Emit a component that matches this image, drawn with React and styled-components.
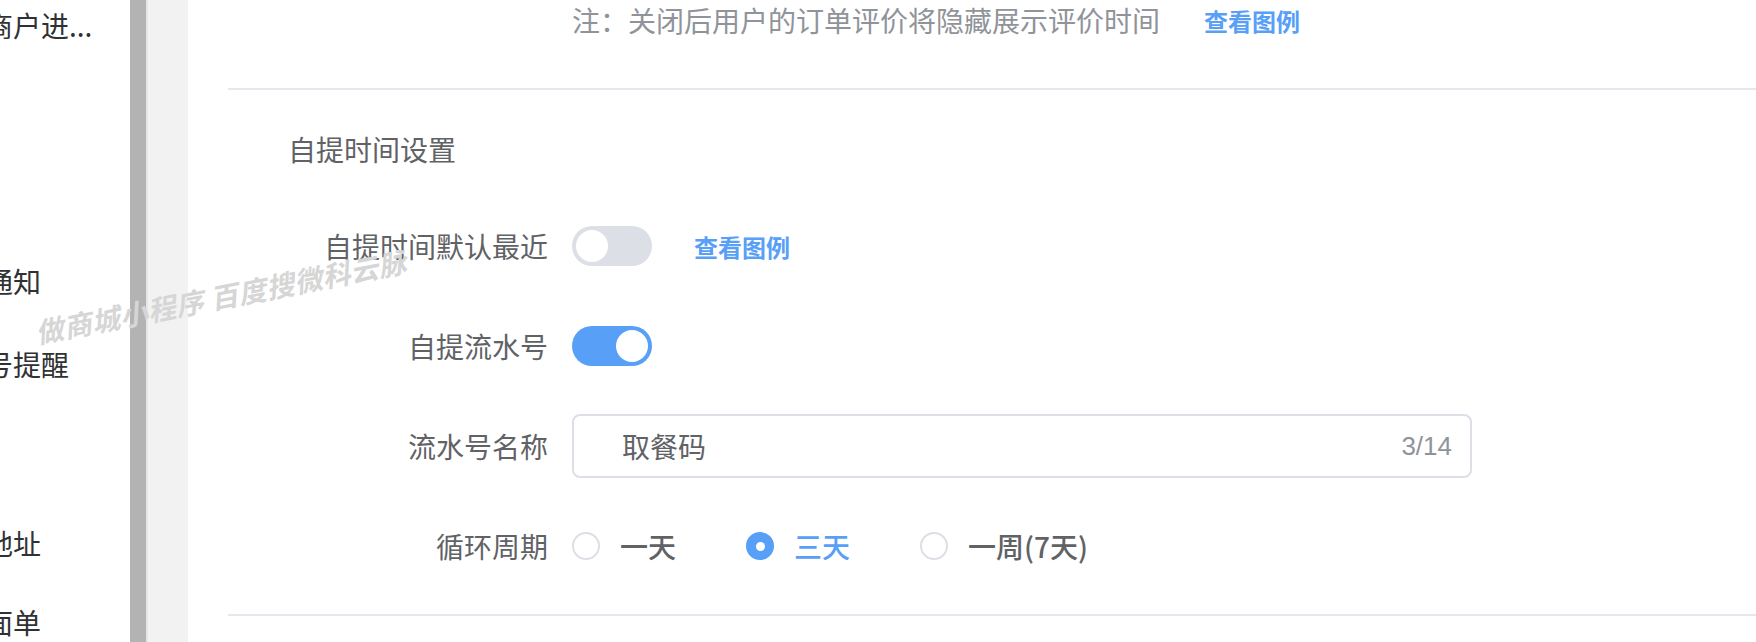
import React from "react";
import styled, { createGlobalStyle } from "styled-components";

const GlobalStyle = createGlobalStyle`
  html, body { margin: 0; padding: 0; background: #ffffff; }
  body {
    width: 1756px;
    height: 642px;
    overflow: hidden;
    font-family: "Noto Sans CJK SC", "Noto Sans", sans-serif;
  }
  * { box-sizing: border-box; }
`;

const Page = styled.div`
  position: relative;
  display: flex;
  width: 1756px;
  height: 642px;
  overflow: hidden;
  background: #ffffff;
`;

const Sidebar = styled.aside`
  width: 130px;
  flex: none;
  overflow: hidden;
  background: #ffffff;
`;

const MenuList = styled.ul`
  list-style: none;
  margin: 0 0 0 -71px;
  padding: 5px 0 0 0;
  width: 240px;
`;

const MenuItem = styled.li`
  height: 40px;
  line-height: 40px;
  margin-top: ${(p) => p.$gap || 0}px;
  font-size: 28px;
  color: #303133;
  white-space: nowrap;
`;

const ScrollThumb = styled.div`
  width: 16px;
  flex: none;
  background: #b3b3b3;
  border-right: 2px solid #e6e6e6;
  box-sizing: content-box;
`;

const Gutter = styled.div`
  width: 40px;
  flex: none;
  background: #f2f2f2;
`;

const Main = styled.main`
  flex: 1;
  padding-left: 40px;
  background: #ffffff;
`;

const Divider = styled.div`
  height: 2px;
  background: #e4e7ed;
  margin-top: ${(p) => p.$top}px;
`;

const Section = styled.section`
  padding-top: 39px;
`;

const SectionTitle = styled.h3`
  margin: 0 0 45px 0;
  padding-left: 60px;
  height: 40px;
  line-height: 40px;
  font-size: 28px;
  font-weight: 400;
  color: #606266;
`;

const FormRow = styled.div`
  display: flex;
  align-items: center;
  height: ${(p) => p.$height || 64}px;
  margin-bottom: ${(p) => p.$gap ?? 36}px;
`;

const Label = styled.label`
  width: 344px;
  flex: none;
  padding-right: 24px;
  text-align: right;
  font-size: 28px;
  color: #606266;
  white-space: nowrap;
`;

const Control = styled.div`
  display: flex;
  align-items: center;
  flex: 1;
`;

const NoteText = styled.span`
  font-size: 28px;
  color: #909399;
  white-space: nowrap;
`;

const Link = styled.a`
  margin-left: ${(p) => p.$left}px;
  font-size: 24px;
  font-weight: 700;
  color: #579ff7;
  text-decoration: none;
  cursor: pointer;
  white-space: nowrap;
`;

const Switch = styled.span`
  display: inline-flex;
  align-items: center;
  justify-content: ${(p) => (p.$on ? "flex-end" : "flex-start")};
  width: 80px;
  height: 40px;
  padding: 0 4px;
  border-radius: 20px;
  background: ${(p) => (p.$on ? "#579ff7" : "#dcdfe6")};
  cursor: pointer;
`;

const Knob = styled.span`
  width: 32px;
  height: 32px;
  border-radius: 50%;
  background: #ffffff;
`;

const InputBox = styled.div`
  display: flex;
  align-items: center;
  width: 900px;
  height: 64px;
  padding: 0 18px 0 48px;
  border: 2px solid #dcdfe6;
  border-radius: 8px;
  background: #ffffff;
`;

const TextInput = styled.input`
  flex: 1;
  min-width: 0;
  border: none;
  outline: none;
  padding: 0;
  background: transparent;
  font-family: "Noto Sans CJK SC", "Noto Sans", sans-serif;
  font-size: 28px;
  color: #606266;
`;

const Counter = styled.span`
  font-family: "Liberation Sans", "Noto Sans", sans-serif;
  font-size: 26px;
  color: #909399;
`;

const RadioGroup = styled.div`
  display: flex;
  align-items: center;
`;

const RadioItem = styled.label`
  display: flex;
  align-items: center;
  margin-right: 70px;
  cursor: pointer;
`;

const RadioCircle = styled.span`
  display: flex;
  align-items: center;
  justify-content: center;
  width: 28px;
  height: 28px;
  border-radius: 50%;
  border: 2px solid ${(p) => (p.$checked ? "#579ff7" : "#dcdfe6")};
  background: ${(p) => (p.$checked ? "#579ff7" : "#ffffff")};

  &::after {
    content: "";
    width: 9px;
    height: 9px;
    border-radius: 50%;
    background: #ffffff;
    display: ${(p) => (p.$checked ? "block" : "none")};
  }
`;

const RadioText = styled.span`
  margin-left: 20px;
  font-size: 28px;
  font-weight: 500;
  color: ${(p) => (p.$checked ? "#579ff7" : "#606266")};
  white-space: nowrap;
`;

const Watermark = styled.div`
  position: absolute;
  left: 32px;
  top: 276px;
  height: 40px;
  line-height: 40px;
  font-size: 28px;
  font-weight: 700;
  font-style: italic;
  color: #d6d6d6;
  white-space: nowrap;
  transform: rotate(-11deg);
  transform-origin: center center;
  pointer-events: none;
  letter-spacing: 0.5px;
`;

const menu = [
  { text: "入驻商户进...", gap: 0 },
  { text: "订单通知", gap: 216 },
  { text: "取餐号提醒", gap: 43 },
  { text: "退货地址", gap: 139 },
  { text: "电子面单", gap: 39 },
];

const cycles = [
  { text: "一天", checked: false },
  { text: "三天", checked: true },
  { text: "一周(7天)", checked: false },
];

export default function App() {
  return (
    <>
      <GlobalStyle />
      <Page>
        <Sidebar>
          <MenuList>
            {menu.map((m) => (
              <MenuItem key={m.text} $gap={m.gap}>
                {m.text}
              </MenuItem>
            ))}
          </MenuList>
        </Sidebar>
        <ScrollThumb />
        <Gutter />
        <Main>
          <FormRow $height={40} $gap={0}>
            <Label />
            <Control>
              <NoteText>注：关闭后用户的订单评价将隐藏展示评价时间</NoteText>
              <Link $left={44}>查看图例</Link>
            </Control>
          </FormRow>
          <Divider $top={48} />
          <Section>
            <SectionTitle>自提时间设置</SectionTitle>
            <FormRow>
              <Label>自提时间默认最近</Label>
              <Control>
                <Switch>
                  <Knob />
                </Switch>
                <Link $left={42}>查看图例</Link>
              </Control>
            </FormRow>
            <FormRow>
              <Label>自提流水号</Label>
              <Control>
                <Switch $on>
                  <Knob />
                </Switch>
              </Control>
            </FormRow>
            <FormRow>
              <Label>流水号名称</Label>
              <Control>
                <InputBox>
                  <TextInput defaultValue="取餐码" readOnly />
                  <Counter>3/14</Counter>
                </InputBox>
              </Control>
            </FormRow>
            <FormRow $gap={0}>
              <Label>循环周期</Label>
              <Control>
                <RadioGroup>
                  {cycles.map((c) => (
                    <RadioItem key={c.text}>
                      <RadioCircle $checked={c.checked} />
                      <RadioText $checked={c.checked}>{c.text}</RadioText>
                    </RadioItem>
                  ))}
                </RadioGroup>
              </Control>
            </FormRow>
          </Section>
          <Divider $top={36} />
        </Main>
        <Watermark>做商城小程序 百度搜微科云脉</Watermark>
      </Page>
    </>
  );
}
